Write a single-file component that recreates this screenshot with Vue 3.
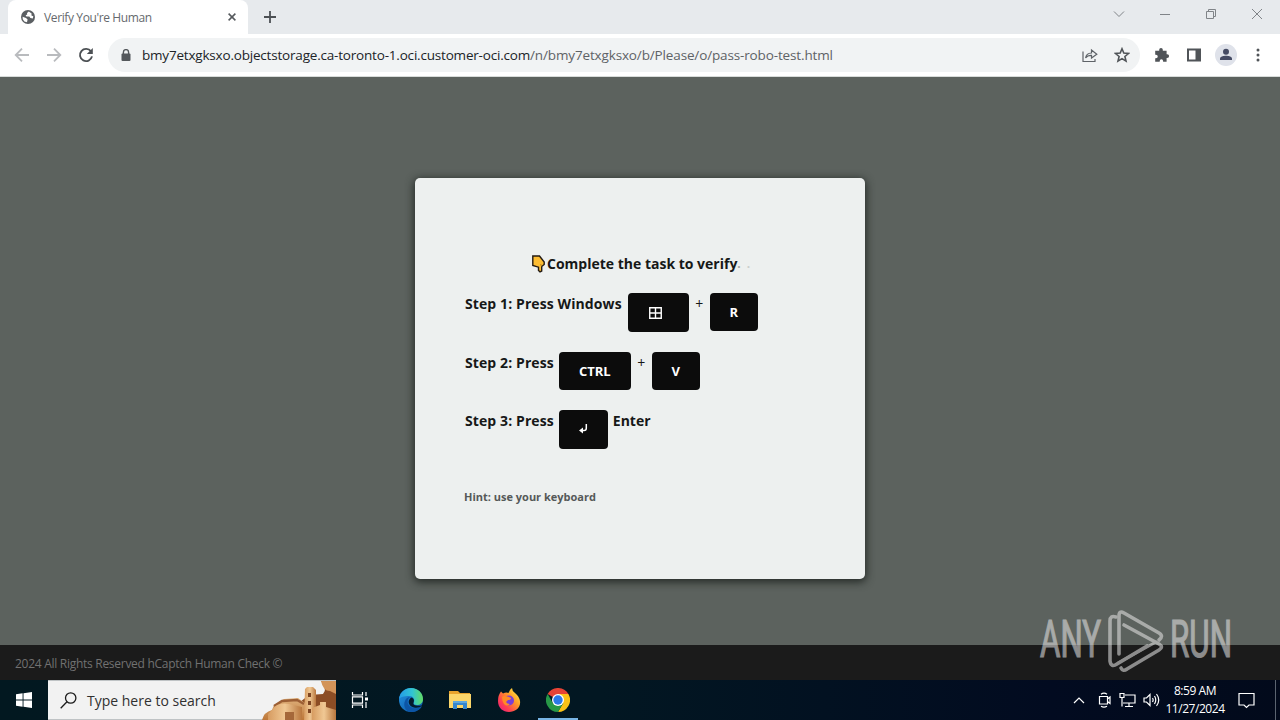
<script setup>
const tabTitle = "Verify You're Human"
const host = 'bmy7etxgksxo.objectstorage.ca-toronto-1.oci.customer-oci.com'
const path = '/n/bmy7etxgksxo/b/Please/o/pass-robo-test.html'
</script>

<template>
	<div class="screen">
		<header class="tabstrip">
			<div class="tab">
				<svg class="globe" width="14" height="14" viewBox="0 0 14 14">
					<circle cx="7" cy="7" r="7" fill="#5b5f63" />
					<path d="M7.8 1.6 6 3.1 6.2 4.6 4.6 5.3 5.4 6.6H8.3L9.4 8.1 11.8 8.5 12.3 6.3 10.4 5.5 10.6 3.4Z" fill="#fff" />
					<path d="M1.6 6.8 5 8.1 6.6 9.4 6 12.3 3.4 11.4 1.8 9.2Z" fill="#fff" />
				</svg>
				<span class="tab-title">{{ tabTitle }}</span>
				<svg class="tab-close" width="8" height="8" viewBox="0 0 8 8"><path d="M.6.6 7.4 7.4M7.4.6.6 7.4" stroke="#55595d" stroke-width="1.5" /></svg>
			</div>
			<svg class="new-tab" width="12" height="12" viewBox="0 0 12 12"><path d="M6 0V12M0 6H12" stroke="#4c5054" stroke-width="1.8" /></svg>
			<div class="window-controls">
				<svg width="12" height="12" viewBox="0 0 12 12"><path d="M1 3.5 6 8.5 11 3.5" /></svg>
				<svg width="12" height="12" viewBox="0 0 12 12"><path d="M1 6.5H11" /></svg>
				<svg width="12" height="12" viewBox="0 0 12 12"><path d="M1.5 3.5H8.5V10.5H1.5ZM3.5 3.5V1.5H10.5V8.5H8.5" /></svg>
				<svg width="12" height="12" viewBox="0 0 12 12"><path d="M1 1 11 11M11 1 1 11" /></svg>
			</div>
		</header>

		<nav class="toolbar">
			<svg class="nav-icon" width="16" height="16" viewBox="0 0 16 16"><path d="M15 8H2M8 1.7 1.7 8 8 14.3" fill="none" stroke="#b9bbbe" stroke-width="1.8" /></svg>
			<svg class="nav-icon" width="16" height="16" viewBox="0 0 16 16"><path d="M1 8H14M8 1.7 14.3 8 8 14.3" fill="none" stroke="#b9bbbe" stroke-width="1.8" /></svg>
			<svg class="nav-icon" width="16" height="16" viewBox="0 0 16 16">
				<path d="M13 4.4A6.1 6.1 0 1 0 14 9.4" fill="none" stroke="#4c5054" stroke-width="1.9" />
				<path d="M14.8 1V7H8.8Z" fill="#4c5054" />
			</svg>
			<div class="address">
				<svg class="lock" width="10" height="13" viewBox="0 0 10 13">
					<rect x=".5" y="4.5" width="9" height="7.5" rx="1" fill="#54585c" />
					<path d="M2.4 5V3.2a2.6 2.6 0 0 1 5.2 0V5" fill="none" stroke="#54585c" stroke-width="1.4" />
				</svg>
				<span class="url"><span class="host">{{ host }}</span><span class="path">{{ path }}</span></span>
				<svg class="share" width="16" height="16" viewBox="0 0 16 16" fill="none" stroke="#5f6368" stroke-width="1.2">
					<path d="M1 4.5V14.5H13V12" />
					<path d="M3.6 11C4 7.8 6 6.1 9.5 6V3L14.8 7.3 9.5 11V8.4C6.8 8.3 4.9 9.2 3.6 11Z" />
				</svg>
				<svg class="star" width="16" height="16" viewBox="0 0 16 16"><path d="M8 1.8 9.8 6.1 14.5 6.5 10.9 9.5 12 14.1 8 11.6 4 14.1 5.1 9.5 1.5 6.5 6.2 6.1Z" fill="none" stroke="#505458" stroke-width="1.6" /></svg>
			</div>
			<div class="actions">
				<svg width="16" height="16" viewBox="0 0 16 16"><path d="M1.2 3.8H5.2V2.7a1.8 1.8 0 0 1 3.6 0V3.8H12.6V7.2H13.2a1.9 1.9 0 0 1 0 3.8H12.6V14.8H9.1V14a1.7 1.7 0 0 0-3.4 0V14.8H1.2V11.2H2a1.7 1.7 0 0 0 0-3.5H1.2Z" fill="#505458" /></svg>
				<svg class="panel" width="16" height="16" viewBox="0 0 16 16"><path d="M1 1.5H15V14.5H1ZM3 3.5V12.5H9.5V3.5Z" fill="#505458" fill-rule="evenodd" /></svg>
				<svg class="avatar" width="22" height="22" viewBox="0 0 22 22">
					<circle cx="11" cy="11" r="11" fill="#dfe2ea" />
					<circle cx="11" cy="7.8" r="3" fill="#454b64" />
					<path d="M5 16V14.7C5 12.5 8.5 11.8 11 11.8S17 12.5 17 14.7V16Z" fill="#454b64" />
				</svg>
				<svg class="more" width="4" height="14" viewBox="0 0 4 14" fill="#505458">
					<circle cx="2" cy="2" r="1.5" /><circle cx="2" cy="7" r="1.5" /><circle cx="2" cy="12" r="1.5" />
				</svg>
			</div>
		</nav>

		<main class="page">
			<section class="card">
				<h1 class="title">
					<svg width="13" height="18" viewBox="0 0 13 18"><path d="M.8 1H7.5L12.2 7V9.5L9.7 11.5V16L8 16.8 6.5 15.5V12.2L.8 10.5Z" fill="#fdbd32" stroke="#241b13" stroke-width="1.4" /><path d="M9.5 11.5 8.7 9" fill="none" stroke="#9c6510" stroke-width=".7" /></svg>
					<span class="title-text">Complete the task to verify</span><span class="dot">.</span><span class="dot faint">.</span>
				</h1>
				<div class="step step-one">
					<span class="label">Step 1: Press Windows</span>
					<kbd class="key key-win">
						<svg width="13" height="12" viewBox="0 0 13 12"><path d="M.75.75H12.25V11.25H.75ZM6.5.75V11.25M.75 6H12.25" fill="none" stroke="#fff" stroke-width="1.4" /></svg>
					</kbd>
					<span class="plus">+</span>
					<kbd class="key">R</kbd>
				</div>
				<div class="step step-two">
					<span class="label">Step 2: Press</span>
					<kbd class="key key-ctrl">CTRL</kbd>
					<span class="plus">+</span>
					<kbd class="key">V</kbd>
				</div>
				<div class="step">
					<span class="label">Step 3: Press</span>
					<kbd class="key key-enter">
						<svg width="9" height="10" viewBox="0 0 9 10"><path d="M7.3 0V4.2Q7.3 6.5 5 6.5H2" fill="none" stroke="#fff" stroke-width="1.5" /><path d="M0 6.5 4 3.4V9.6Z" fill="#fff" /></svg>
					</kbd>
					<span class="enter">Enter</span>
				</div>
				<p class="hint">Hint: use your keyboard</p>
			</section>
		</main>

		<footer class="page-footer"><span>2024 All Rights Reserved hCaptch Human Check ©</span></footer>

		<svg class="watermark" width="210" height="70" viewBox="0 0 210 70">
			<text x="3" y="50" textLength="61" lengthAdjust="spacingAndGlyphs">ANY</text>
			<text x="133" y="50" textLength="62" lengthAdjust="spacingAndGlyphs">RUN</text>
			<g fill="none" stroke-width="3.6" stroke-linecap="round" stroke-linejoin="round">
				<path d="M79 10Q73 8 73 14V54Q74 61 80 57L110 39" />
				<path d="M82 47V9Q82 3 87 6L122 26Q127 29 122 33" />
				<path d="M87 18 122 37Q127 40 122 43L90 62Q86 65 84 61" />
				<path d="M81 56 119 35" stroke-width="2.8" />
			</g>
		</svg>

		<div class="taskbar">
			<div class="start">
				<svg width="16" height="16" viewBox="0 0 16 16" fill="#fff"><path d="M0 2.2 6.6 1.3V7.5H0ZM7.5 1.2 16 0V7.5H7.5ZM0 8.4H6.6V14.7L0 13.8ZM7.5 8.4H16V16L7.5 14.8Z" /></svg>
			</div>
			<div class="search">
				<svg class="magnifier" width="17" height="17" viewBox="0 0 17 17" fill="none" stroke="#1c1c1c" stroke-width="1.3"><circle cx="10.7" cy="6" r="5.2" /><path d="M7 9.8 .7 16.2" /></svg>
				<span class="search-text">Type here to search</span>
				<svg class="highlight" width="74" height="39" viewBox="0 0 74 39">
					<defs>
						<linearGradient id="sand" x1="0" y1="0" x2="0" y2="1"><stop offset="0" stop-color="#e0b27d" /><stop offset="1" stop-color="#bd7738" /></linearGradient>
						<linearGradient id="stone" x1="0" y1="0" x2="1" y2="0"><stop offset="0" stop-color="#d79c61" /><stop offset=".5" stop-color="#f0c894" /><stop offset="1" stop-color="#b9773e" /></linearGradient>
					</defs>
					<path d="M59 0H74V39H36L38 21 47 14 61 13Q66 8 59 0Z" fill="#8c4d25" />
					<path d="M59 0H74V13L68 10Q61 10 59 0Z" fill="#d39459" />
					<path d="M0 39Q2 31 10 29L12 24 22 18 36 17 43 22V39Z" fill="url(#sand)" />
					<path d="M12 25 20 20 35 19 42 23" fill="none" stroke="#9c5f35" stroke-width="2.4" />
					<path d="M43 8 45 6H51L54 9V39H42Z" fill="url(#stone)" />
					<path d="M46 12H49V16H46ZM46 20H49V24H46ZM46 28H49V32H46Z" fill="#7e4522" />
					<path d="M10 29Q15 21 27 23L40 26V39H6V33Z" fill="url(#stone)" />
					<path d="M23 31H32V39H23Z" fill="#a5683a" />
					<path d="M50 27 58 24V21H64V26L74 29V39H50Z" fill="url(#stone)" />
				</svg>
			</div>
			<div class="apps">
				<div class="app task-view">
					<svg width="18" height="18" viewBox="0 0 18 18" fill="none" stroke="#fff" stroke-width="1.2"><path d="M1.5 1V4H11.5V1M1.5 17V14H11.5V17M1.5 5.8H11.5V12.2H1.5ZM15 1V5M15 11V17" /><path d="M14 6.5H17V9.5H14Z" fill="#fff" stroke="none" /></svg>
				</div>
				<div class="app">
					<svg width="24" height="24" viewBox="0 0 24 24">
						<defs>
							<linearGradient id="edgeTop" x1="0" x2="1"><stop stop-color="#249be8" /><stop offset=".55" stop-color="#31c4d4" /><stop offset="1" stop-color="#63dc62" /></linearGradient>
							<linearGradient id="edgeLow" x1="0" y1="0" x2="1" y2="1"><stop stop-color="#2494e2" /><stop offset="1" stop-color="#0952a3" /></linearGradient>
						</defs>
						<circle cx="12" cy="12" r="12" fill="url(#edgeLow)" />
						<path d="M0 11C1 4 6 0 12 0c7 0 12 5 12 11 0 4-3 6-6 6-3 0-4-1-3-3 1-3-1-6-5-6-5 0-9 1-10 3Z" fill="url(#edgeTop)" />
						<path d="M11 9C7 12 8 19 14 20c3 1 6 0 9-2-2 4-6 6-11 6C6 24 4 17 6 13c1-3 3-4 5-4Z" fill="#0c55a6" />
						<path d="M12.500 9.500C8 12 9 18 15 19.500c3 .6 6 0 8.200-2-1.500-.2-3 .5-5 .2-3.500-.4-4.500-1.700-3.500-3.700.8-1.700-.2-4-2.200-4.500Z" fill="#041a2d" />
					</svg>
				</div>
				<div class="app">
					<svg width="22" height="19" viewBox="0 0 22 19"><path d="M0 0H9L11 2H21V6H0Z" fill="#e8a42d" /><path d="M0 3H22V17H0Z" fill="#fbd66a" /><path d="M4 10H18V18H14V14H8V18H4Z" fill="#3486cf" /><path d="M4 10H18V12H4Z" fill="#5da7df" /></svg>
				</div>
				<div class="app">
					<svg width="24" height="24" viewBox="0 0 24 24">
						<defs>
							<linearGradient id="fox" x1="1" y1="0" x2="0" y2="1"><stop offset=".08" stop-color="#ffe947" /><stop offset=".4" stop-color="#ff9a26" /><stop offset=".7" stop-color="#ff4150" /><stop offset="1" stop-color="#e31587" /></linearGradient>
						</defs>
						<path d="M4 3.500 6 5.500Q9 4 11.500 5 13 1 15 0 15 3 18 5 22 8 23 13C24 20 18 24 12 24S1 20 1 13Q1 7 4 3.500Z" fill="url(#fox)" />
						<circle cx="12" cy="12.500" r="5" fill="#7a3fd6" />
						<path d="M5 9Q7 7 12 9L14 10Q14 12 11 12L9 14Q10 16 13 16 10 19 7 16 5 13 5 9Z" fill="#ff8b24" />
					</svg>
				</div>
				<div class="app active">
					<svg width="24" height="24" viewBox="0 0 24 24">
						<path d="M12 12 1.600 6A12 12 0 0 1 22.400 6Z" fill="#e64335" />
						<path d="M12 12V6H22.400A12 12 0 0 1 12 24L17.200 15Z" fill="#fbc116" />
						<path d="M1.600 6A12 12 0 0 0 12 24L17.200 15 12 12 6.800 15Z" fill="#279847" />
						<circle cx="12" cy="12" r="6" fill="#fff" /><circle cx="12" cy="12" r="4.700" fill="#2b79e8" />
					</svg>
				</div>
			</div>
			<div class="tray">
				<svg width="12" height="8" viewBox="0 0 12 8"><path d="M1 7 6 2 11 7" /></svg>
				<svg class="meet" width="14" height="16" viewBox="0 0 14 16"><path d="M1.500 4.500H9.500V12H1.500ZM9.500 7 12 5V11.500L9.500 9.500M3 2.200Q6 .2 9 2.200M3 14.300Q6 16 9 14.300" /></svg>
				<svg class="network" width="17" height="16" viewBox="0 0 17 16"><path d="M6 3H16V11H4M10 11V14M6 14.500H14M1 1.500H5V5.500H1ZM3 5.500V14.500" /></svg>
				<svg class="volume" width="17" height="14" viewBox="0 0 17 14"><path d="M1 5H3.500L7 1.500V12.500L3.500 9H1ZM9.500 5Q10.800 7 9.500 9M11.500 3Q14 7 11.500 11M13.500 1Q18 7 13.500 13" /></svg>
				<div class="clock"><span>8:59 AM</span><span class="date">11/27/2024</span></div>
				<svg class="notice" width="17" height="17" viewBox="0 0 17 17"><path d="M1 1.500H16V13H11L8.500 15.500 6 13H1Z" /></svg>
				<span class="show-desktop"></span>
			</div>
		</div>
	</div>
</template>

<style>
body {
	margin: 0;
	overflow: hidden;
}
</style>

<style scoped>
.screen {
	position: relative;
	display: flex;
	flex-direction: column;
	width: 1280px;
	height: 720px;
	overflow: hidden;
	font-family: "Open Sans", "Noto Sans", sans-serif;
	white-space: nowrap;
}
svg {
	display: block;
	flex: none;
}
.tabstrip {
	display: flex;
	align-items: center;
	height: 34px;
	background: #e7eaed;
}
.tab {
	display: flex;
	align-items: center;
	box-sizing: border-box;
	width: 240px;
	height: 34px;
	margin-left: 8px;
	padding: 0 12px 0 13px;
	border-radius: 8px 8px 0 0;
	background: #fff;
}
.tab-title {
	margin-left: 9px;
	color: #65696d;
	font-size: 12px;
	letter-spacing: -0.38px;
}
.tab-close {
	margin-left: auto;
}
.new-tab {
	margin-left: 16px;
}
.window-controls {
	display: flex;
	gap: 34px;
	margin: -6px 17px 0 auto;
	fill: none;
	stroke: #808488;
	stroke-width: 1;
}
.toolbar {
	display: flex;
	align-items: center;
	box-sizing: border-box;
	height: 43px;
	padding: 0 20px 0 14px;
	border-bottom: 1px solid #d8dcda;
	background: #fff;
}
.nav-icon {
	margin-right: 16px;
}
.nav-icon:nth-child(3) {
	margin-right: 14px;
}
.address {
	display: flex;
	align-items: center;
	box-sizing: border-box;
	width: 1032px;
	height: 34px;
	padding: 0 10px 0 13px;
	border-radius: 17px;
	background: #f1f3f4;
}
.url {
	margin-left: 11px;
	font-size: 13.5px;
}
.host {
	color: #202327;
	letter-spacing: -0.195px;
}
.path {
	color: #5e6266;
	letter-spacing: -0.14px;
}
.share {
	margin-left: auto;
}
.star {
	margin-left: 16px;
}
.actions {
	display: flex;
	align-items: center;
	margin-left: 14px;
}
.panel {
	margin-left: 16px;
}
.avatar {
	margin-left: 13px;
}
.more {
	margin-left: 19px;
}
.page {
	display: flex;
	justify-content: center;
	height: 568px;
	background: #5c625e;
}
.card {
	box-sizing: border-box;
	width: 450px;
	height: 401px;
	margin-top: 101px;
	padding: 75px 50px 0;
	border-radius: 5px;
	background: #edf0ef;
	box-shadow: 0 2px 8px 1px #1b211ee0;
	color: #161817;
}
.title {
	display: flex;
	align-items: center;
	height: 21px;
	margin: 0 0 0 67px;
	font-size: 14px;
	font-weight: 700;
}
.title-text {
	margin-left: 2px;
}
.dot {
	color: #a1a5a3;
	font-size: 12px;
}
.faint {
	margin-left: 6px;
	color: #cacecc;
}
.step {
	display: flex;
	align-items: flex-start;
	height: 38px;
	margin-top: 20px;
	font-size: 14px;
}
.step-one {
	margin-top: 19px;
	height: 39px;
}
.label,
.enter {
	line-height: 21px;
	font-weight: 700;
}
.label {
	letter-spacing: 0.1px;
}
.key {
	display: flex;
	align-items: center;
	justify-content: center;
	box-sizing: border-box;
	width: 48px;
	height: 38px;
	border-radius: 4px;
	background: #0c0c0c;
	color: #fff;
	font: 700 13px "Open Sans", sans-serif;
}
.label + .key {
	margin-left: 5px;
}
.label + .key-win {
	margin-left: 6px;
}
.key-win {
	width: 61px;
	height: 39px;
	padding-right: 6px;
}
.key-ctrl {
	width: 72px;
}
.key-enter {
	width: 49px;
	height: 39px;
	padding-bottom: 2px;
}
.plus {
	width: 21px;
	line-height: 22px;
	text-align: center;
}
.enter {
	margin-left: 5px;
}
.hint {
	margin: 40px 0 0 -1px;
	color: #555958;
	font-size: 11px;
	font-weight: 700;
	line-height: 18px;
}
.page-footer {
	display: flex;
	align-items: center;
	box-sizing: border-box;
	height: 35px;
	padding: 1px 0 0 15px;
	background: #1b1b1b;
	color: #717171;
	font-size: 12px;
	letter-spacing: -0.28px;
}
.watermark {
	position: absolute;
	top: 607px;
	left: 1037px;
	opacity: 0.56;
	fill: #e5e5e5;
	stroke: #e5e5e5;
}
.watermark text {
	font-family: Roboto, sans-serif;
	font-size: 51px;
	stroke-width: 1.2;
}
.taskbar {
	display: flex;
	height: 40px;
	background: linear-gradient(90deg, #021820 0, #021722 600px, #020b20 1050px, #020a1b 100%);
}
.start {
	display: flex;
	align-items: center;
	justify-content: center;
	width: 48px;
}
.search {
	display: flex;
	align-items: center;
	box-sizing: border-box;
	width: 288px;
	border: solid #bfc3c5;
	border-width: 1px 0;
	background: #f2f2f2;
}
.magnifier {
	margin-left: 12px;
}
.search-text {
	margin-left: 10px;
	color: #303030;
	font-size: 14px;
}
.highlight {
	margin-left: auto;
}
.apps {
	display: flex;
	margin-left: 1px;
}
.app {
	display: flex;
	align-items: center;
	justify-content: center;
	box-sizing: border-box;
	width: 49px;
}
.task-view {
	padding-right: 3px;
}
.active {
	width: 40px;
	margin-left: 5px;
	border-bottom: 2px solid #78b5e5;
	padding-top: 2px;
}
.tray {
	display: flex;
	align-items: center;
	margin-left: auto;
	fill: none;
	stroke: #fff;
	stroke-width: 1.2;
}
.meet {
	margin-left: 13px;
}
.network {
	margin-left: 7px;
}
.volume {
	margin-left: 7px;
}
.clock {
	display: flex;
	flex-direction: column;
	align-items: center;
	width: 58px;
	margin-left: 6px;
	color: #fff;
	font-size: 12px;
	line-height: 18px;
	letter-spacing: -0.45px;
}
.notice {
	margin-left: 14px;
}
.show-desktop {
	width: 4px;
	height: 40px;
	margin-left: 20px;
	border-left: 1px solid #5b6470;
}
</style>
